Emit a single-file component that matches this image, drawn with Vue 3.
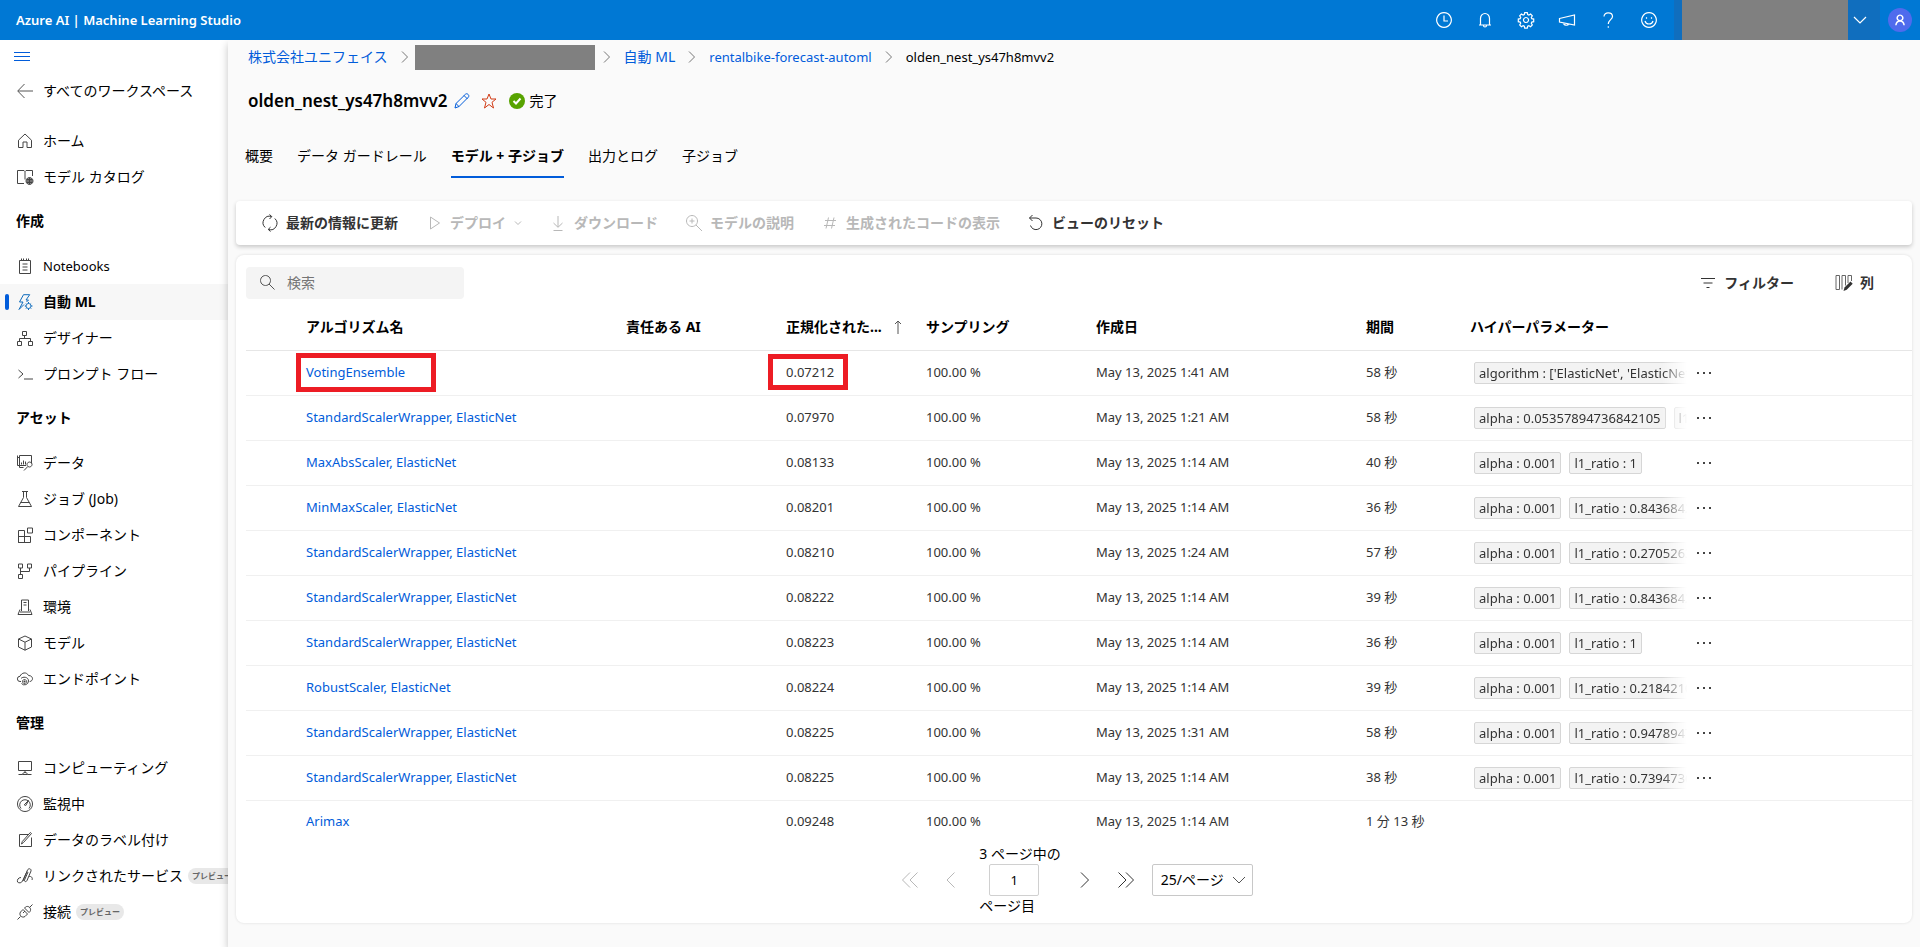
<script setup>
import { ref } from 'vue';

const search = ref('');
const page = ref('1');
const pageSize = ref('25');
const activeTab = ref('モデル + 子ジョブ');

const icons = {
    home: 'M1.500 7.200 8 1l6.500 6.200v7.300H10V9H6v5.500H1.500z',
    catalog: 'M7 14.500H.5v-13H7l1 1 1-1h6.500v5.500M8 2.500v8M12.500 8.500a3.500 3.500 0 1 0 .01 0zM9 12h7M12.500 8.500v7M11 9v6M14 9v6M9.500 10.500h6M9.500 13.500h6',
    notebook: 'M2.500 2.500h11v13h-11zM4.500.5v2M6.500.5v2M9.500.5v2M11.500.5v2M5.500 6h5M5.500 9h5M5.500 12h5',
    automl: 'M6.500.7h6.200L9 6h2.500L9.500 8M6.500.7 2.500 8H6L2 15.500l5-5M11.500 9.500a2.500 2.500 0 1 0 .01 0zM11.500 8v1.500M11.500 14.500V16M7.800 12H9M14 12h1.500M9 9.500l.8.8M13.200 13.700l1 1M9 14.600l.8-.9M13.200 10.300l.9-.8',
    designer: 'M5.500 1.500h4v4h-4zM.5 11.500h4v4h-4zM11.500 11.500h4v4h-4zM7.500 5.500v3M2.500 11.500v-3h11v3',
    prompt: 'M1.500 4 6 8l-4.500 4M7 13h9',
    data: 'M2.500 3V.5h12v8M9 10.500H.5v-10M2.500 2.500h-2M2.500 3v9.500h4M4.500 9.500v-2M6.500 9.500v-4M8.500 9.500v-3M12.500 7a2.500 2.500 0 1 0 .01 0zM10.800 11.500 7 15.500',
    job: 'M5 .5h6M6.500.5v6l-5 9h13l-5-9v-6M3.500 11.500h9',
    component: 'M1.500 3.500h6v12h-6zM1.500 9.500h12v6h-12zM7.500 9.500v6M10.500 1h5v5h-5z',
    pipeline: 'M1.500 1h4v4h-4zM10.500 1h4v4h-4zM1.500 11.500h4v4h-4zM3.500 5v6.500M3.500 8.500h9V5',
    environment: 'M4.500 12V1h7v11M6.500 3.500h3M3 10.500l-2 5h14l-2-5M3 13h10M6.500 6h3',
    model: 'M8 1l6.500 3v8L8 15.200 1.500 12V4zM1.500 4 8 7.200 14.500 4M8 7.200v8',
    endpoint: 'M4 10.500H3A2.600 2.600 0 0 1 3 5.300C4.500 1.500 9.500.5 11.500 4.500c3 0 4 2 4 3.200s-1 2.800-2.800 2.800M4 7.500c1.500-2 7.500-2 7.500 2.500a4 4 0 0 1-7 2.500M7.500 8.500a2 2 0 1 0 .01 0zM7.500 9.500v2M6.500 10.500h2',
    compute: 'M1.500 1.500h13v9h-13zM8 10.500v2M1.500 14.500h4c0-1 1-2 2.500-2s2.500 1 2.500 2h4M5.500 14.500h5',
    monitor: 'M8 .5a7.500 7.500 0 1 0 .01 0zM4 12.500a5.300 5.300 0 1 1 8 0M7.200 8.800 11.500 4.500 8.800 9.500z',
    label: 'M11 2.500H2.500v12h12V5.500M14.500 1.500l-8 9-2 1.500.8-2.500 8-9z',
    linked: 'M4 9.500c-3 0-4 2.500-3.500 4.500 1.500 1.500 4 1 5-1L10 3.500M6 13l4.500-11c1-2 4-1.500 3.500 1l-4 9.500c-1 2-3 1-2.500-.5L11 4M12 8.500c2-.5 4 1 3 3.500',
    connection: 'M.5 15.500 3.500 12.500M12.500 3.500l3-3M6 5.500 3.500 8c-2 3 1.500 6.500 4.500 4.500l2.500-2.500M6 5.500l4.500 4.500M7.500 4 12 8.500l1-1c2-3-1.500-6.500-4.500-4.500zM6 9l2-2',
    back: 'M16 8H1M7.500 1 .7 8l6.800 7',
    refresh: 'M9.500 1.500A6.500 6.500 0 0 0 3.200 12.500M7.500-.5 9.800 1.600 7.500 4M6.500 14.500A6.500 6.500 0 0 0 12.800 3.500M8.500 12.200 6.200 14.400l2.300 2.100',
    play: 'M4.500 2v12l9-6z',
    download: 'M8 1v11M3.500 8 8 12.300 12.500 8M3.500 15.500h9',
    explain: 'M6 .5a5.500 5.500 0 1 0 .01 0zM10 10l6 6M6 3.500v5M3.500 6h5',
    hash: 'M6.500 2.500l-2.500 11M12 2.500l-2.500 11M3 5.500h11M2 10.500h11',
    reset: 'M4.500 0 1.500 3l3 3M1.500 3H8a5.800 5.800 0 1 1-5.500 7.500',
    search: 'M5.500.5a5 5 0 1 0 .01 0zM9 9l5.500 5.500',
    filter: 'M1 3.500h14M3.500 8h9M6.500 12.500h3',
    chevronRight: 'M5 2.500 10.500 8 5 13.500',
    chevronLeft: 'M10.500.5 3 8l7.500 7.500',
    next: 'M5 .5 12.500 8 5 15.500',
    first: 'M8 .5.5 8 8 15.500M15.500.5 8 8l7.500 7.500',
    last: 'M.5.5 8 8 .5 15.500M8 .5 15.500 8 8 15.500',
    chevronDown: 'M2 5l6 6 6-6',
    sortUp: 'M8 15V2M5 5l3-3 3 3',
    edit: 'M1 15l1-4.500L11.500 1.200c1.500-1.500 4.300 1 3 2.800L5 13.500zM10 2.500 13.500 6M2 10.500 5.200 13.800',
    star: 'M8 1l2 5h5l-4 3.300L12.500 15 8 11.500 3.500 15 5 9.300 1 6h5z',
    clock: 'M8 .7a7.300 7.300 0 1 0 .01 0zM8 3.500V9h4',
    bell: 'M2 13h12M3.500 13V6.500a4.500 5 0 0 1 9 0V13M6.500 13.500a1.500 1.500 0 0 0 3 0',
    settings: 'M8 5.500a2.500 2.500 0 1 0 .01 0zM6.700.7h2.600l.4 1.900 1.200.5 1.700-1 1.700 1.700-1 1.700.5 1.200 1.900.4v2.600l-1.900.4-.5 1.200 1 1.700-1.700 1.700-1.700-1-1.200.5-.4 1.900H6.700l-.4-1.900-1.200-.5-1.700 1-1.700-1.700 1-1.700-.5-1.200-1.900-.4V7.100l1.900-.4.5-1.200-1-1.700 1.700-1.700 1.700 1 1.200-.5z',
    megaphone: 'M.5 6.500 15.500 3v10L.5 10zM4.500 11c0 2.500 4.500 3 5 1',
    help: 'M4 4.500c0-5 8.500-4.500 8.500 0 0 3-4.200 3.500-4.200 7.500M8.300 14.200v1.500',
    smile: 'M8 .7a7.300 7.300 0 1 0 .01 0zM4 9c1 4 7 4 8 0M5.500 5.200v1.600M10.500 5.200v1.600',
    person: 'M8 1.500a3.800 3.800 0 1 0 .01 0zM2.500 15c.5-4 2.500-5.800 5.500-5.800s5 1.800 5.500 5.800'
};

const headerIcons = [
    { icon: 'clock', label: '最近' },
    { icon: 'bell', label: '通知' },
    { icon: 'settings', label: '設定' },
    { icon: 'megaphone', label: 'お知らせ' },
    { icon: 'help', label: 'ヘルプ' },
    { icon: 'smile', label: 'フィードバック' }
];

const navGroups = [
    {
        items: [
            { icon: 'home', label: 'ホーム' },
            { icon: 'catalog', label: 'モデル カタログ' }
        ]
    },
    {
        title: '作成',
        items: [
            { icon: 'notebook', label: 'Notebooks', latin: true },
            { icon: 'automl', label: '自動 ML', active: true },
            { icon: 'designer', label: 'デザイナー' },
            { icon: 'prompt', label: 'プロンプト フロー' }
        ]
    },
    {
        title: 'アセット',
        items: [
            { icon: 'data', label: 'データ' },
            { icon: 'job', label: 'ジョブ (Job)' },
            { icon: 'component', label: 'コンポーネント' },
            { icon: 'pipeline', label: 'パイプライン' },
            { icon: 'environment', label: '環境' },
            { icon: 'model', label: 'モデル' },
            { icon: 'endpoint', label: 'エンドポイント' }
        ]
    },
    {
        title: '管理',
        items: [
            { icon: 'compute', label: 'コンピューティング' },
            { icon: 'monitor', label: '監視中' },
            { icon: 'label', label: 'データのラベル付け' },
            { icon: 'linked', label: 'リンクされたサービス', preview: true },
            { icon: 'connection', label: '接続', preview: true }
        ]
    }
];

const tabs = ['概要', 'データ ガードレール', 'モデル + 子ジョブ', '出力とログ', '子ジョブ'];

const commands = [
    { icon: 'refresh', label: '最新の情報に更新' },
    { icon: 'play', label: 'デプロイ', disabled: true, menu: true },
    { icon: 'download', label: 'ダウンロード', disabled: true },
    { icon: 'explain', label: 'モデルの説明', disabled: true },
    { icon: 'hash', label: '生成されたコードの表示', disabled: true },
    { icon: 'reset', label: 'ビューのリセット' }
];

const rows = [
    { name: 'VotingEnsemble', score: '0.07212', created: '1:41', duration: '58 秒', params: ["algorithm : ['ElasticNet', 'ElasticNet']"], marked: true },
    { name: 'StandardScalerWrapper, ElasticNet', score: '0.07970', created: '1:21', duration: '58 秒', params: ['alpha : 0.05357894736842105', 'l1_ratio : 1'] },
    { name: 'MaxAbsScaler, ElasticNet', score: '0.08133', created: '1:14', duration: '40 秒', params: ['alpha : 0.001', 'l1_ratio : 1'] },
    { name: 'MinMaxScaler, ElasticNet', score: '0.08201', created: '1:14', duration: '36 秒', params: ['alpha : 0.001', 'l1_ratio : 0.8436842'] },
    { name: 'StandardScalerWrapper, ElasticNet', score: '0.08210', created: '1:24', duration: '57 秒', params: ['alpha : 0.001', 'l1_ratio : 0.2705263'] },
    { name: 'StandardScalerWrapper, ElasticNet', score: '0.08222', created: '1:14', duration: '39 秒', params: ['alpha : 0.001', 'l1_ratio : 0.8436842'] },
    { name: 'StandardScalerWrapper, ElasticNet', score: '0.08223', created: '1:14', duration: '36 秒', params: ['alpha : 0.001', 'l1_ratio : 1'] },
    { name: 'RobustScaler, ElasticNet', score: '0.08224', created: '1:14', duration: '39 秒', params: ['alpha : 0.001', 'l1_ratio : 0.2184210'] },
    { name: 'StandardScalerWrapper, ElasticNet', score: '0.08225', created: '1:31', duration: '58 秒', params: ['alpha : 0.001', 'l1_ratio : 0.9478947'] },
    { name: 'StandardScalerWrapper, ElasticNet', score: '0.08225', created: '1:14', duration: '38 秒', params: ['alpha : 0.001', 'l1_ratio : 0.7394736'] },
    { name: 'Arimax', score: '0.09248', created: '1:14', duration: '1 分 13 秒', params: [] }
];
</script>

<template>
    <div class="app">
        <header class="topbar">
            <span class="brand">Azure AI | Machine Learning Studio</span>
            <div class="topbar-actions">
                <button v-for="item in headerIcons" :key="item.icon" class="icon-btn" :aria-label="item.label">
                    <svg class="icon" viewBox="0 0 16 16"><path :d="icons[item.icon]" /></svg>
                </button>
            </div>
            <button class="directory" aria-label="ディレクトリ">
                <span class="directory-mask"></span>
                <svg class="icon" viewBox="0 0 16 16"><path :d="icons.chevronDown" /></svg>
            </button>
            <button class="avatar" aria-label="アカウント">
                <svg class="avatar-icon" viewBox="0 0 16 16"><path :d="icons.person" /></svg>
            </button>
        </header>

        <div class="body">
            <nav class="sidebar">
                <button class="menu-btn" aria-label="メニュー"></button>
                <a href="#" class="back-link">
                    <svg class="icon" viewBox="0 0 16 16"><path :d="icons.back" /></svg>
                    すべてのワークスペース
                </a>
                <div v-for="(group, index) in navGroups" :key="index">
                    <h2 v-if="group.title" class="nav-title">{{ group.title }}</h2>
                    <a v-for="item in group.items" :key="item.label" href="#"
                        :class="['nav-item', { 'nav-item--active': item.active, latin: item.latin }]">
                        <svg class="icon" viewBox="0 0 16 16"><path :d="icons[item.icon]" /></svg>
                        {{ item.label }}
                        <span v-if="item.preview" class="badge">プレビュー</span>
                    </a>
                </div>
            </nav>

            <main class="main">
                <nav class="breadcrumb">
                    <a href="#">株式会社ユニフェイス</a>
                    <svg class="icon" viewBox="0 0 16 16"><path :d="icons.chevronRight" /></svg>
                    <span class="crumb-mask"></span>
                    <svg class="icon" viewBox="0 0 16 16"><path :d="icons.chevronRight" /></svg>
                    <a href="#">自動 ML</a>
                    <svg class="icon" viewBox="0 0 16 16"><path :d="icons.chevronRight" /></svg>
                    <a href="#" class="latin">rentalbike-forecast-automl</a>
                    <svg class="icon" viewBox="0 0 16 16"><path :d="icons.chevronRight" /></svg>
                    <span class="latin">olden_nest_ys47h8mvv2</span>
                </nav>

                <div class="title-row">
                    <h1 class="title">olden_nest_ys47h8mvv2</h1>
                    <button class="icon-btn edit-btn" aria-label="編集">
                        <svg class="icon" viewBox="0 0 16 16"><path :d="icons.edit" /></svg>
                    </button>
                    <button class="icon-btn star-btn" aria-label="お気に入り">
                        <svg class="icon" viewBox="0 0 16 16"><path :d="icons.star" /></svg>
                    </button>
                    <span class="status">
                        <svg class="status-icon" viewBox="0 0 16 16">
                            <circle cx="8" cy="8" r="8" />
                            <path d="M4.500 8l2.500 2.500L11.500 5.500" />
                        </svg>
                        完了
                    </span>
                </div>

                <div class="tabs" role="tablist">
                    <button v-for="tab in tabs" :key="tab" role="tab" :aria-selected="tab === activeTab"
                        :class="['tab', { 'tab--active': tab === activeTab }]" @click="activeTab = tab">
                        {{ tab }}
                    </button>
                </div>

                <div class="commands">
                    <button v-for="command in commands" :key="command.label" class="command" :disabled="command.disabled">
                        <svg class="icon" viewBox="0 0 16 16"><path :d="icons[command.icon]" /></svg>
                        {{ command.label }}
                        <svg v-if="command.menu" class="command-chevron" viewBox="0 0 16 16"><path :d="icons.chevronDown" /></svg>
                    </button>
                </div>

                <section class="card">
                    <div class="toolbar">
                        <label class="search">
                            <svg class="icon" viewBox="0 0 16 16"><path :d="icons.search" /></svg>
                            <input v-model="search" type="text" placeholder="検索" aria-label="検索">
                        </label>
                        <button class="command toolbar-filter">
                            <svg class="icon" viewBox="0 0 16 16"><path :d="icons.filter" /></svg>
                            フィルター
                        </button>
                        <button class="command">
                            <svg class="icon columns-icon" viewBox="0 0 16 16">
                                <path d="M0 .5h3.500v14H0zM6 14.500V.5h3.500v10M12 8V.5h3.500V6" />
                                <path class="columns-pen" d="M7.500 16l1-3.500 6-6 2.200 2.200-6 6z" />
                            </svg>
                            列
                        </button>
                    </div>

                    <table class="grid">
                        <colgroup>
                            <col class="col-select">
                            <col class="col-name">
                            <col class="col-ai">
                            <col class="col-score">
                            <col class="col-sampling">
                            <col class="col-created">
                            <col class="col-duration">
                            <col>
                        </colgroup>
                        <thead>
                            <tr>
                                <th></th>
                                <th>アルゴリズム名</th>
                                <th>責任ある AI</th>
                                <th>
                                    <span class="sorted">
                                        正規化された...
                                        <svg class="icon" viewBox="0 0 16 16"><path :d="icons.sortUp" /></svg>
                                    </span>
                                </th>
                                <th>サンプリング</th>
                                <th>作成日</th>
                                <th>期間</th>
                                <th>ハイパーパラメーター</th>
                            </tr>
                        </thead>
                        <tbody>
                            <tr v-for="(row, index) in rows" :key="index">
                                <td></td>
                                <td :class="{ 'marked marked--name': row.marked }"><a href="#">{{ row.name }}</a></td>
                                <td></td>
                                <td :class="{ 'marked marked--score': row.marked }">{{ row.score }}</td>
                                <td>100.00 %</td>
                                <td>May 13, 2025 {{ row.created }} AM</td>
                                <td>{{ row.duration }}</td>
                                <td class="params-cell">
                                    <div v-if="row.params.length" class="params">
                                        <div class="params-list">
                                            <span v-for="param in row.params" :key="param" class="param">{{ param }}</span>
                                        </div>
                                        <button class="more" aria-label="その他"><i></i><i></i><i></i></button>
                                    </div>
                                </td>
                            </tr>
                        </tbody>
                    </table>

                    <div class="pager">
                        <button class="pager-btn" disabled aria-label="最初">
                            <svg class="icon" viewBox="0 0 16 16"><path :d="icons.first" /></svg>
                        </button>
                        <button class="pager-btn" disabled aria-label="前へ">
                            <svg class="icon" viewBox="0 0 16 16"><path :d="icons.chevronLeft" /></svg>
                        </button>
                        <label class="pager-page">
                            <span>3 ページ中の</span>
                            <input v-model="page" type="text">
                            <span>ページ目</span>
                        </label>
                        <button class="pager-btn" aria-label="次へ">
                            <svg class="icon" viewBox="0 0 16 16"><path :d="icons.next" /></svg>
                        </button>
                        <button class="pager-btn" aria-label="最後">
                            <svg class="icon" viewBox="0 0 16 16"><path :d="icons.last" /></svg>
                        </button>
                        <div class="page-size">
                            <select v-model="pageSize" aria-label="ページ サイズ">
                                <option value="25">25/ページ</option>
                                <option value="50">50/ページ</option>
                            </select>
                            <svg class="icon" viewBox="0 0 16 16"><path :d="icons.chevronDown" /></svg>
                        </div>
                    </div>
                </section>
            </main>
        </div>
    </div>
</template>

<style>
body {
    margin: 0;
    background: #fafafa;
}
</style>

<style scoped>
*,
*::before,
*::after {
    box-sizing: border-box;
}

.app {
    display: flex;
    flex-direction: column;
    min-height: 100vh;
    font-family: "Noto Sans", "Noto Sans CJK JP", sans-serif;
    font-size: 14px;
    line-height: 20px;
    color: #000;
}

button,
input,
select {
    font: inherit;
    color: inherit;
}

button {
    padding: 0;
    border: none;
    background: none;
    cursor: pointer;
}

a {
    color: #015cda;
    text-decoration: none;
}

.latin {
    font-size: 13px;
}

.icon {
    flex: none;
    display: block;
    width: 16px;
    height: 16px;
    fill: none;
    stroke: currentColor;
    stroke-width: 1;
    overflow: visible;
}

/* top bar */
.topbar {
    display: flex;
    align-items: center;
    height: 40px;
    padding-left: 16px;
    background: #0078d4;
    color: #fff;
}

.topbar .icon {
    stroke-width: 1.2;
}

.brand {
    flex: 1;
    font-size: 13px;
    font-weight: 600;
}

.topbar-actions {
    display: flex;
    gap: 25px;
    margin-right: 17px;
}

.directory {
    display: flex;
    align-items: center;
    height: 40px;
    padding: 0 12px 0 8px;
    background: #106ebe;
}

.directory-mask {
    width: 166px;
    height: 40px;
    margin-right: 4px;
    background: #808080;
}

.avatar {
    display: flex;
    align-items: center;
    justify-content: center;
    width: 24px;
    height: 24px;
    margin: 0 8px;
    border-radius: 50%;
    background: #4f6bed;
}

.avatar-icon {
    width: 12px;
    height: 12px;
    fill: none;
    stroke: #fff;
    stroke-width: 2;
}

.body {
    flex: 1;
    display: flex;
}

/* sidebar */
.sidebar {
    width: 228px;
    flex: none;
    overflow: hidden;
    background: #fff;
}

.menu-btn {
    display: block;
    width: 16px;
    height: 9px;
    margin: 12px 14px;
    border-top: 1px solid #015cda;
    border-bottom: 1px solid #015cda;
    background: linear-gradient(#015cda, #015cda) 0 3px / 16px 1px no-repeat;
}

.back-link {
    display: flex;
    align-items: center;
    gap: 10px;
    height: 36px;
    margin-bottom: 14px;
    padding-left: 17px;
    color: #000;
    white-space: nowrap;
}

.back-link .icon {
    stroke: #555;
}

.nav-title {
    height: 53px;
    margin: 0;
    padding: 16px;
    font-size: 14px;
    font-weight: 700;
}

.nav-item {
    display: flex;
    align-items: center;
    gap: 10px;
    height: 36px;
    padding-left: 17px;
    color: #000;
    white-space: nowrap;
}

.nav-item .icon {
    stroke: #444;
}

.nav-item--active {
    position: relative;
    background: #f7f7f7;
    font-weight: 700;
}

.nav-item--active .icon {
    stroke: #0f6cbd;
}

.nav-item--active::before {
    content: "";
    position: absolute;
    top: 10px;
    left: 5px;
    width: 4px;
    height: 16px;
    border-radius: 2px;
    background: #015cda;
}

.badge {
    margin-left: -5px;
    padding: 0 4px;
    border-radius: 8px;
    background: #e8e8e8;
    color: #666;
    font-size: 8px;
    font-weight: 700;
    line-height: 16px;
}

/* main */
.main {
    flex: 1;
    min-width: 0;
    padding: 0 8px 24px;
    background: #fafafa;
    box-shadow: 0 4px 8px rgba(0, 0, 0, 0.24);
    clip-path: inset(0 0 0 -12px);
}

.breadcrumb {
    display: flex;
    align-items: center;
    gap: 9px;
    height: 34px;
    padding-left: 12px;
}

.breadcrumb .icon {
    stroke: #777;
}

.crumb-mask {
    width: 180px;
    height: 25px;
    margin: 0 -5px 0 -7px;
    background: #808080;
}

.title-row {
    display: flex;
    align-items: center;
    height: 54px;
    padding-left: 12px;
}

.title {
    margin: 0;
    font-size: 17px;
    font-weight: 600;
}

.edit-btn {
    margin-left: 6px;
    color: #015cda;
}

.star-btn {
    margin-left: 11px;
    color: #d13b15;
}

.status {
    display: flex;
    align-items: center;
    gap: 5px;
    margin-left: 12px;
}

.status-icon {
    width: 16px;
    height: 16px;
    fill: #57a300;
}

.status-icon path {
    fill: none;
    stroke: #fff;
    stroke-width: 2;
}

.tabs {
    display: flex;
    gap: 24px;
    height: 50px;
    margin: 0 0 23px 9px;
}

.tab {
    padding-top: 8px;
    border-bottom: 2px solid transparent;
}

.tab--active {
    border-color: #015cda;
    font-weight: 700;
}

.commands {
    display: flex;
    gap: 28px;
    height: 44px;
    padding-left: 26px;
    border-radius: 4px;
    background: #fff;
    box-shadow: 0 2px 4px rgba(0, 0, 0, 0.2);
}

.command {
    display: flex;
    align-items: center;
    gap: 8px;
    color: #333;
    font-weight: 600;
    white-space: nowrap;
}

.command:disabled {
    color: #b8b8b8;
    cursor: default;
}

.command-chevron {
    width: 8px;
    height: 8px;
    fill: none;
    stroke: currentColor;
    stroke-width: 2;
}

/* results card */
.card {
    margin-top: 10px;
    padding: 12px 0 7px 10px;
    border-radius: 8px;
    background: #fff;
    box-shadow: 0 0 3px rgba(0, 0, 0, 0.12);
}

.toolbar {
    display: flex;
    gap: 42px;
    padding-right: 38px;
}

.toolbar-filter {
    margin-left: auto;
}

.search {
    display: flex;
    align-items: center;
    gap: 11px;
    width: 218px;
    height: 32px;
    padding: 0 14px;
    border-radius: 4px;
    background: #f4f4f4;
    color: #555;
}

.search input {
    width: 100%;
    min-width: 0;
    padding: 0;
    border: none;
    outline: none;
    background: none;
}

.search input::placeholder {
    color: #757575;
    opacity: 1;
}

.columns-icon {
    stroke: #666;
}

.columns-pen {
    fill: #333;
    stroke: none;
}

.grid {
    width: 100%;
    table-layout: fixed;
    border-collapse: collapse;
}

.col-select {
    width: 50px;
}

.col-name {
    width: 320px;
}

.col-ai {
    width: 160px;
}

.col-score {
    width: 140px;
}

.col-sampling {
    width: 170px;
}

.col-created {
    width: 270px;
}

.col-duration {
    width: 104px;
}

.grid th {
    height: 51px;
    padding: 6px 0 0 10px;
    border-bottom: 1px solid #e6e6e6;
    text-align: left;
    font-weight: 700;
    white-space: nowrap;
}

.grid td {
    height: 45px;
    padding: 0 0 2px 10px;
    border-bottom: 1px solid #f0f0f0;
    color: #333;
    font-size: 13px;
    white-space: nowrap;
}

.grid .params-cell {
    padding-bottom: 0;
}

.grid tr:last-child td {
    height: 44px;
    border-bottom: none;
}

.sorted {
    display: flex;
    align-items: center;
    gap: 8px;
}

.sorted .icon {
    stroke: #555;
}

.marked {
    position: relative;
}

.marked::after {
    content: "";
    position: absolute;
    border: 5px solid #ed1c24;
    pointer-events: none;
}

.marked--name::after {
    top: 2px;
    left: 0;
    width: 140px;
    height: 39px;
}

.marked--score::after {
    top: 3px;
    left: -8px;
    width: 80px;
    height: 36px;
}

.params {
    display: flex;
    align-items: center;
    gap: 10px;
    padding-left: 4px;
}

.params-list {
    display: flex;
    gap: 8px;
    width: 213px;
    overflow: hidden;
    mask-image: linear-gradient(to right, #000 188px, transparent);
}

.param {
    flex: none;
    padding: 0 4px;
    border: 1px solid #d6d6d6;
    border-radius: 2px;
    background: #f3f3f3;
    line-height: 20px;
}

.more {
    display: flex;
    gap: 4px;
}

.more i {
    width: 2px;
    height: 2px;
    background: #444;
}

/* pager */
.pager {
    display: flex;
    align-items: center;
    justify-content: center;
    margin-right: 16px;
}

.pager-btn {
    padding: 0 13px;
    color: #333;
}

.pager-btn:disabled {
    color: #b8b8b8;
}

.pager-page {
    display: flex;
    flex-direction: column;
    align-items: flex-start;
    margin: 0 2px 0 6px;
}

.pager-page input {
    width: 50px;
    height: 32px;
    margin: 0 10px;
    padding: 0;
    border: 1px solid #d0d0d0;
    border-radius: 2px;
    text-align: center;
    font-size: 13px;
}

.page-size {
    position: relative;
    margin-left: 5px;
}

.page-size select {
    width: 101px;
    height: 32px;
    padding: 0 8px;
    border: 1px solid #c8c8c8;
    border-radius: 2px;
    background: #fff;
    appearance: none;
}

.page-size .icon {
    position: absolute;
    top: 8px;
    right: 6px;
    pointer-events: none;
    stroke: #555;
}
</style>
